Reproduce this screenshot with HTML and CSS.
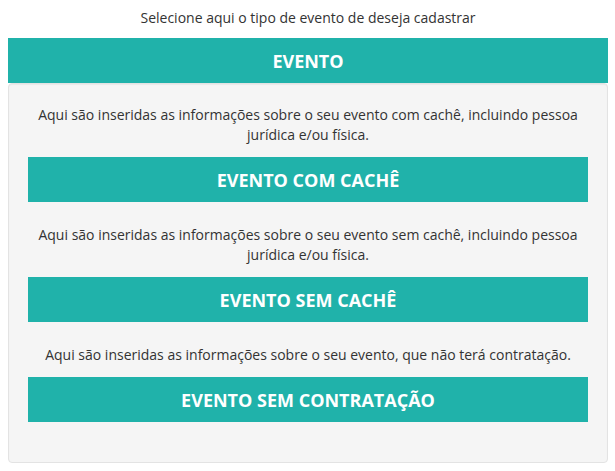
FILE: index.html
```html
<!DOCTYPE html>
<html lang="pt">
<head>
<meta charset="utf-8">
<link rel="stylesheet" href="styles.css">
</head>
<body>
<div class="container">
  <p class="intro">Selecione aqui o tipo de evento de deseja cadastrar</p>
  <div class="header">EVENTO</div>
  <div class="well">
    <p class="desc">Aqui são inseridas as informações sobre o seu evento com cachê, incluindo pessoa jurídica e/ou física.</p>
    <a class="btn">EVENTO COM CACHÊ</a>
    <p class="desc">Aqui são inseridas as informações sobre o seu evento sem cachê, incluindo pessoa jurídica e/ou física.</p>
    <a class="btn">EVENTO SEM CACHÊ</a>
    <p class="desc">Aqui são inseridas as informações sobre o seu evento, que não terá contratação.</p>
    <a class="btn">EVENTO SEM CONTRATAÇÃO</a>
  </div>
</div>
</body>
</html>
```
FILE: styles.css
```css
* { box-sizing: border-box; }
html, body { margin: 0; padding: 0; background: #fff; }
body {
  font-family: "Open Sans", "Noto Sans", sans-serif;
  font-size: 14px;
  line-height: 20px;
  color: #333;
}
.container {
  width: 600px;
  margin: 8px 0 0 8px;
}
.intro {
  margin: 0 0 10px;
  text-align: center;
}
.header {
  background: #20b2aa;
  color: #fff;
  font-weight: 700;
  font-size: 18px;
  height: 45px;
  display: flex;
  align-items: center;
  justify-content: center;
}
.well {
  background: #f5f5f5;
  border: 1px solid #e3e3e3;
  border-radius: 4px;
  box-shadow: inset 0 1px 1px rgba(0,0,0,.05);
  padding: 19px 24px;
  display: flex;
  flex-direction: column;
}
.desc {
  margin: 2px 0 12px;
  text-align: center;
}
.btn {
  display: flex;
  align-items: center;
  justify-content: center;
  height: 45px;
  margin: 0 -5px 21px;
  background: #20b2aa;
  color: #fff;
  font-weight: 700;
  font-size: 18px;
}
```
